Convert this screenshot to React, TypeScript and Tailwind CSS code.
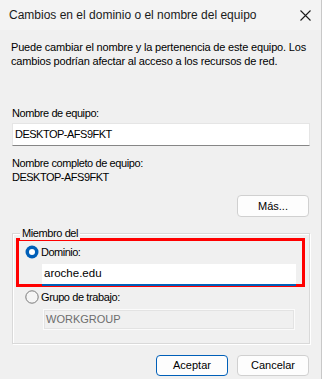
import React from "react";

const font = { fontFamily: '"Liberation Sans", Arial, sans-serif' };

function Radio({ checked }: { checked: boolean }) {
  return checked ? (
    <svg width="14" height="14" viewBox="0 0 14 14" className="shrink-0">
      <circle cx="7" cy="7" r="6.5" fill="#005fb8" />
      <circle cx="7" cy="7" r="3" fill="#ffffff" />
    </svg>
  ) : (
    <svg width="14" height="14" viewBox="0 0 14 14" className="shrink-0">
      <circle cx="7" cy="7" r="6.2" fill="#f5f5f5" stroke="#7a7a7a" strokeWidth="1" />
    </svg>
  );
}

export default function App() {
  return (
    <div
      className="w-[322px] h-[379px] bg-[#f0f0f0] text-[11px] text-black border-r border-[#c8c8c8] overflow-hidden"
      style={font}
    >
      {/* Title bar */}
      <div className="h-[30px] bg-[#f3f3f3] flex items-center justify-between pl-[9px] pr-[10px]">
        <span className="text-[12px] text-[#1a1a1a]">Cambios en el dominio o el nombre del equipo</span>
        <svg width="11" height="11" viewBox="0 0 11 11">
          <path d="M0.5 0.5 L10.5 10.5 M10.5 0.5 L0.5 10.5" stroke="#1a1a1a" strokeWidth="1.1" />
        </svg>
      </div>

      <div className="pl-[12px] pr-[11px]">
        <p className="mt-[10px] leading-[14px] ml-[-1px] whitespace-nowrap tracking-[-0.18px]">
          Puede cambiar el nombre y la pertenencia de este equipo. Los
          <br />
          cambios podrían afectar al acceso a los recursos de red.
        </p>

        <div className="mt-[38px] leading-[14px] tracking-[-0.4px]">Nombre de equipo:</div>
        <div className="mt-[3px] h-[23px] bg-white border border-[#e5e5e5] border-b-[#868686] flex items-center pl-[2px] tracking-[-0.5px]">
          DESKTOP-AFS9FKT
        </div>

        <div className="mt-[10px] leading-[14px] tracking-[-0.4px]">Nombre completo de equipo:</div>
        <div className="mt-[0px] leading-[14px] tracking-[-0.5px]">DESKTOP-AFS9FKT</div>

        <div className="flex justify-end mt-[11px]">
          <button className="w-[72px] h-[22px] bg-[#fdfdfd] border border-[#d0d0d0] rounded-[4px] text-[11px] leading-none mr-[1px]">
            Más...
          </button>
        </div>

        {/* Group box */}
        <div className="relative mt-[16px] border border-[#d9d9d9] shadow-[inset_1px_1px_0_#ffffff,1px_1px_0_#ffffff] h-[111px]">
          <span className="absolute left-[7px] top-[-8px] px-[2px] bg-[#f0f0f0] leading-[14px] tracking-[-0.4px]">
            Miembro del
          </span>

          <div className="ml-[3px] mr-[4px] mt-[4px] border-[3px] border-[#ff0000] h-[49px] pl-[6px] pr-[6px]">
            <div className="flex items-center gap-[2px] mt-[4px] h-[14px]">
              <Radio checked />
              <span className="leading-[14px] tracking-[-0.5px]">Dominio:</span>
            </div>
            <div className="mt-[5px] ml-[17px] h-[22px] bg-white border-b-2 border-[#005fb8] flex items-center pl-[2px] text-[11.5px]">
              aroche.edu
            </div>
          </div>

          <div className="flex items-center gap-[2px] mt-[3px] ml-[12px] h-[14px]">
            <Radio checked={false} />
            <span className="leading-[14px] tracking-[-0.4px]">Grupo de trabajo:</span>
          </div>
          <div className="mt-[5px] ml-[30px] mr-[14px] h-[21px] bg-[#f0f0f0] border border-[#fbfbfb] shadow-[inset_0_0_0_1px_#e3e3e3] flex items-center pl-[2px] text-[#6d6d6d]">
            WORKGROUP
          </div>
        </div>

        <div className="flex justify-end gap-[9px] mt-[11px] mr-[1px]">
          <button className="w-[72px] h-[21px] bg-[#fdfdfd] border border-[#005fb8] rounded-[4px] text-[11px] leading-none">
            Aceptar
          </button>
          <button className="w-[72px] h-[21px] bg-[#fdfdfd] border border-[#d0d0d0] rounded-[4px] text-[11px] leading-none">
            Cancelar
          </button>
        </div>
      </div>
    </div>
  );
}
